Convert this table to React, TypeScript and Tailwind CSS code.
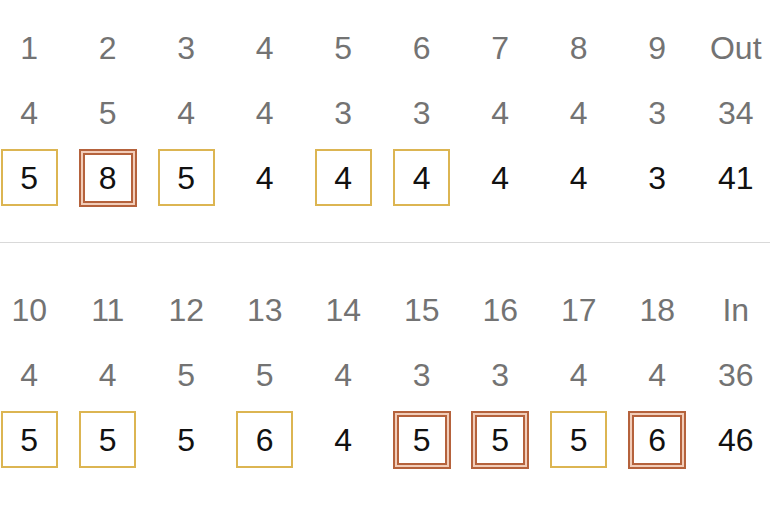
import React from "react";

type Mark = "none" | "single" | "double";

const front = {
  holes: ["1", "2", "3", "4", "5", "6", "7", "8", "9", "Out"],
  par: ["4", "5", "4", "4", "3", "3", "4", "4", "3", "34"],
  score: ["5", "8", "5", "4", "4", "4", "4", "4", "3", "41"],
  marks: ["single", "double", "single", "none", "single", "single", "none", "none", "none", "none"] as Mark[],
};
const back = {
  holes: ["10", "11", "12", "13", "14", "15", "16", "17", "18", "In"],
  par: ["4", "4", "5", "5", "4", "3", "3", "4", "4", "36"],
  score: ["5", "5", "5", "6", "4", "5", "5", "5", "6", "46"],
  marks: ["single", "single", "none", "single", "none", "double", "double", "single", "double", "none"] as Mark[],
};

function Score({ v, m }: { v: string; m: Mark }) {
  if (m === "single") {
    return (
      <div className="w-[57px] h-[57px] border-2 border-[#dcb552] flex items-center justify-center">
        {v}
      </div>
    );
  }
  if (m === "double") {
    return (
      <div className="w-[58px] h-[58px] border-2 border-[#b5623c] bg-[#f2cdb9] p-[2px]">
        <div className="w-full h-full border-2 border-[#b5623c] bg-white flex items-center justify-center">
          {v}
        </div>
      </div>
    );
  }
  return <div className="h-[57px] flex items-center justify-center">{v}</div>;
}

function Block({ d }: { d: typeof front }) {
  return (
    <div className="grid grid-cols-10 w-[785px] -ml-[10px] text-[32px] leading-none">
      {d.holes.map((h, i) => (
        <div key={"h" + i} className="h-[65px] flex items-center justify-center text-[#737373]">
          {h}
        </div>
      ))}
      {d.par.map((h, i) => (
        <div key={"p" + i} className="h-[65px] flex items-center justify-center text-[#737373]">
          {h}
        </div>
      ))}
      {d.score.map((h, i) => (
        <div key={"s" + i} className="h-[65px] flex items-center justify-center text-[#111111]">
          <Score v={h} m={d.marks[i]} />
        </div>
      ))}
    </div>
  );
}

export default function App() {
  return (
    <div
      className="w-[770px] h-[515px] bg-white overflow-hidden"
      style={{ fontFamily: '"Liberation Sans", Arial, sans-serif' }}
    >
      <div className="pt-[15px]">
        <Block d={front} />
      </div>
      <div className="mt-[32px] h-px bg-[#d9d9d9]" />
      <div className="pt-[34px]">
        <Block d={back} />
      </div>
    </div>
  );
}
